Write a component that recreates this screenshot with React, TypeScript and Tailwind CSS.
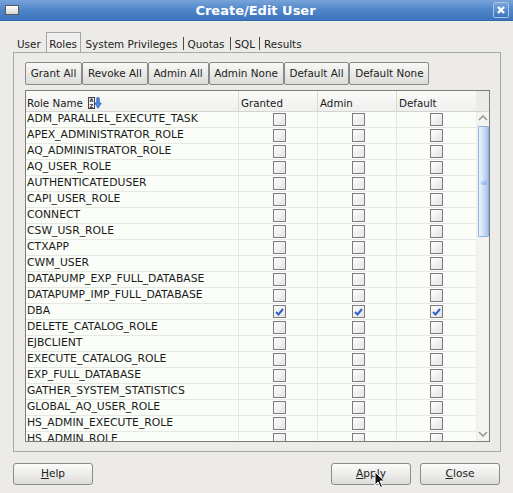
import React from "react";

const roles = [
  "ADM_PARALLEL_EXECUTE_TASK",
  "APEX_ADMINISTRATOR_ROLE",
  "AQ_ADMINISTRATOR_ROLE",
  "AQ_USER_ROLE",
  "AUTHENTICATEDUSER",
  "CAPI_USER_ROLE",
  "CONNECT",
  "CSW_USR_ROLE",
  "CTXAPP",
  "CWM_USER",
  "DATAPUMP_EXP_FULL_DATABASE",
  "DATAPUMP_IMP_FULL_DATABASE",
  "DBA",
  "DELETE_CATALOG_ROLE",
  "EJBCLIENT",
  "EXECUTE_CATALOG_ROLE",
  "EXP_FULL_DATABASE",
  "GATHER_SYSTEM_STATISTICS",
  "GLOBAL_AQ_USER_ROLE",
  "HS_ADMIN_EXECUTE_ROLE",
  "HS_ADMIN_ROLE",
];

function Check({ on }: { on: boolean }) {
  return (
    <div className="w-[13px] h-[13px] border border-[#7d7d7d] bg-gradient-to-br from-[#fdfdfd] via-[#f1f1f3] to-[#e2e2e5] flex items-center justify-center">
      {on && (
        <svg width="9" height="8" viewBox="0 0 9 8">
          <path d="M1 4 L3.5 6.5 L8 1" stroke="#2f63c8" strokeWidth="2" fill="none" />
        </svg>
      )}
    </div>
  );
}

function TopBtn({ label }: { label: string }) {
  return (
    <div className="h-[23px] px-[4.8px] flex items-center border border-[#8a8a8a] rounded-[2px] bg-gradient-to-b from-[#f8f8f6] to-[#dcdcd9] text-[10.4px] text-[#222] whitespace-nowrap">
      {label}
    </div>
  );
}

function FootBtn({ first, rest }: { first: string; rest: string }) {
  return (
    <div className="w-[80px] h-[22px] flex items-center justify-center border border-[#8a8a8a] rounded-[3px] bg-gradient-to-b from-[#fbfbfa] to-[#dedddb] text-[10.6px] text-[#222]">
      <span className="underline">{first}</span>
      <span>{rest}</span>
    </div>
  );
}

function Sep() {
  return <div className="w-px h-[13px] bg-[#4a4a4a] mb-[2px]" />;
}

export default function App() {
  return (
    <div
      className="w-[513px] h-[493px] bg-[#ecebe8] flex flex-col overflow-hidden relative"
      style={{ fontFamily: '"DejaVu Sans", sans-serif' }}
    >
      {/* Title bar */}
      <div className="h-[21px] shrink-0 bg-gradient-to-b from-[#78a3d9] via-[#4f85c9] to-[#3e74bd] flex items-center border-b border-[#3569ad]">
        <div className="ml-[5px] w-[14px] h-[10px] bg-gradient-to-b from-white to-[#d8d8d8] border border-[#5a5a5a]" />
        <div className="flex-1 text-center text-white font-bold text-[13px] leading-none pr-[1px]">
          Create/Edit User
        </div>
        <div className="mr-[4px] w-[16px] h-[16px] border border-[#a9c4e6] rounded-[2px] bg-gradient-to-b from-[#7aa5dc] to-[#3f73bb] flex items-center justify-center">
          <svg width="10" height="10" viewBox="0 0 10 10">
            <path d="M2 2 L8 8 M8 2 L2 8" stroke="white" strokeWidth="2.4" />
          </svg>
        </div>
      </div>

      {/* Tabs */}
      <div className="h-[31px] shrink-0 pl-[17px] flex items-end text-[10.4px] text-[#222]">
        <div className="h-[19px] pt-[4px] flex items-center">User</div>
        <div className="ml-[5px] px-[2.5px] h-[20px] pt-[4px] flex items-center border border-b-0 border-[#a5a5a5] bg-[#f0efed]">
          Roles
        </div>
        <div className="ml-[5px] h-[19px] pt-[4px] flex items-center">System Privileges</div>
        <div className="ml-[5px]"><Sep /></div>
        <div className="ml-[4px] h-[19px] pt-[4px] flex items-center">Quotas</div>
        <div className="ml-[5px]"><Sep /></div>
        <div className="ml-[4px] h-[19px] pt-[4px] flex items-center">SQL</div>
        <div className="ml-[4px]"><Sep /></div>
        <div className="ml-[4px] h-[19px] pt-[4px] flex items-center">Results</div>
      </div>

      {/* Panel */}
      <div className="ml-[13px] w-[488px] h-[400px] shrink-0 border border-[#a8a8a6] pl-[11px] pt-[9px]">
        <div className="flex">
          <TopBtn label="Grant All" />
          <TopBtn label="Revoke All" />
          <TopBtn label="Admin All" />
          <TopBtn label="Admin None" />
          <TopBtn label="Default All" />
          <TopBtn label="Default None" />
        </div>

        {/* Table */}
        <div className="mt-[5px] w-[465px] h-[352px] border border-[#7c7c7c] bg-[#fbfdf9] flex flex-col overflow-hidden text-[#1a1a1a]">
          {/* Header */}
          <div className="h-[21px] flex border-b border-[#d4d4d2] bg-gradient-to-b from-[#fafaf9] to-[#efefed] shrink-0 text-[10.3px]">
            <div className="w-[213px] pl-[1px] flex items-end border-r border-[#d8d8d6]">
              <span>Role Name</span>
              <svg className="ml-[5px] mb-[2px]" width="14" height="12" viewBox="0 0 14 12">
                <rect x="0.5" y="0.5" width="6" height="11" fill="#f4f6fb" stroke="#444" />
                <text x="1.4" y="5.2" fontSize="5" fontWeight="bold" fill="#223" fontFamily="DejaVu Sans">A</text>
                <text x="1.4" y="10.6" fontSize="5" fontWeight="bold" fill="#223" fontFamily="DejaVu Sans">Z</text>
                <path d="M8.8 0.8 H11.2 V6 H13.3 L10 11.2 L6.9 6 H8.8 Z" fill="#4d8ee6" stroke="#2a5fb5" strokeWidth="0.8" />
              </svg>
            </div>
            <div className="w-[79px] pl-[2px] flex items-end border-r border-[#d8d8d6]">Granted</div>
            <div className="w-[79px] pl-[2px] flex items-end border-r border-[#d8d8d6]">Admin</div>
            <div className="w-[79px] pl-[2px] flex items-end">Default</div>
            <div className="flex-1 bg-[#ecebe8]" />
          </div>
          {/* Body */}
          <div className="flex flex-1 min-h-0 text-[10.8px]">
            <div className="w-[450px] flex flex-col">
              {roles.map((r) => {
                const on = r === "DBA";
                return (
                  <div key={r} className="h-[16px] shrink-0 flex border-b border-[#e6e8e4]">
                    <div className="w-[213px] pl-[1px] flex items-center border-r border-[#e6e8e4] whitespace-nowrap">
                      {r}
                    </div>
                    <div className="w-[79px] pl-[2px] flex items-center justify-center border-r border-[#e6e8e4]">
                      <Check on={on} />
                    </div>
                    <div className="w-[79px] pl-[2px] flex items-center justify-center border-r border-[#e6e8e4]">
                      <Check on={on} />
                    </div>
                    <div className="w-[79px] flex items-center justify-center">
                      <Check on={on} />
                    </div>
                  </div>
                );
              })}
            </div>
            {/* Scrollbar */}
            <div className="w-[13px] bg-[#f3f3f1] border-l border-[#ececea] flex flex-col items-center">
              <svg className="mt-[3px]" width="10" height="6" viewBox="0 0 10 6">
                <path d="M1 5 L5 1 L9 5" stroke="#9a9a9a" strokeWidth="1.6" fill="none" />
              </svg>
              <div className="mt-[5px] w-[11px] h-[111px] border border-[#8fb1e2] rounded-[1px] bg-gradient-to-r from-[#eef4fc] via-[#cddff5] to-[#a7c2e8] flex items-center justify-center">
                <div className="w-[7px] h-[7px] rounded-full bg-gradient-to-br from-[#ffffff] to-[#6f9ee0]" />
              </div>
              <div className="flex-1" />
              <svg className="mb-[4px]" width="10" height="6" viewBox="0 0 10 6">
                <path d="M1 1 L5 5 L9 1" stroke="#9a9a9a" strokeWidth="1.6" fill="none" />
              </svg>
            </div>
          </div>
        </div>
      </div>

      {/* Footer */}
      <div className="mt-[11px] px-[13px] flex">
        <FootBtn first="H" rest="elp" />
        <div className="flex-1" />
        <FootBtn first="A" rest="pply" />
        <div className="w-[9px]" />
        <FootBtn first="C" rest="lose" />
      </div>

      {/* Mouse cursor */}
      <svg className="absolute left-[374px] top-[471px]" width="12" height="19" viewBox="0 0 12 19">
        <path d="M1 1 L1 14 L4 11 L6.5 16.5 L8.5 15.5 L6 10 L10.5 10 Z" fill="#111" stroke="#fff" strokeWidth="1" />
      </svg>
    </div>
  );
}
